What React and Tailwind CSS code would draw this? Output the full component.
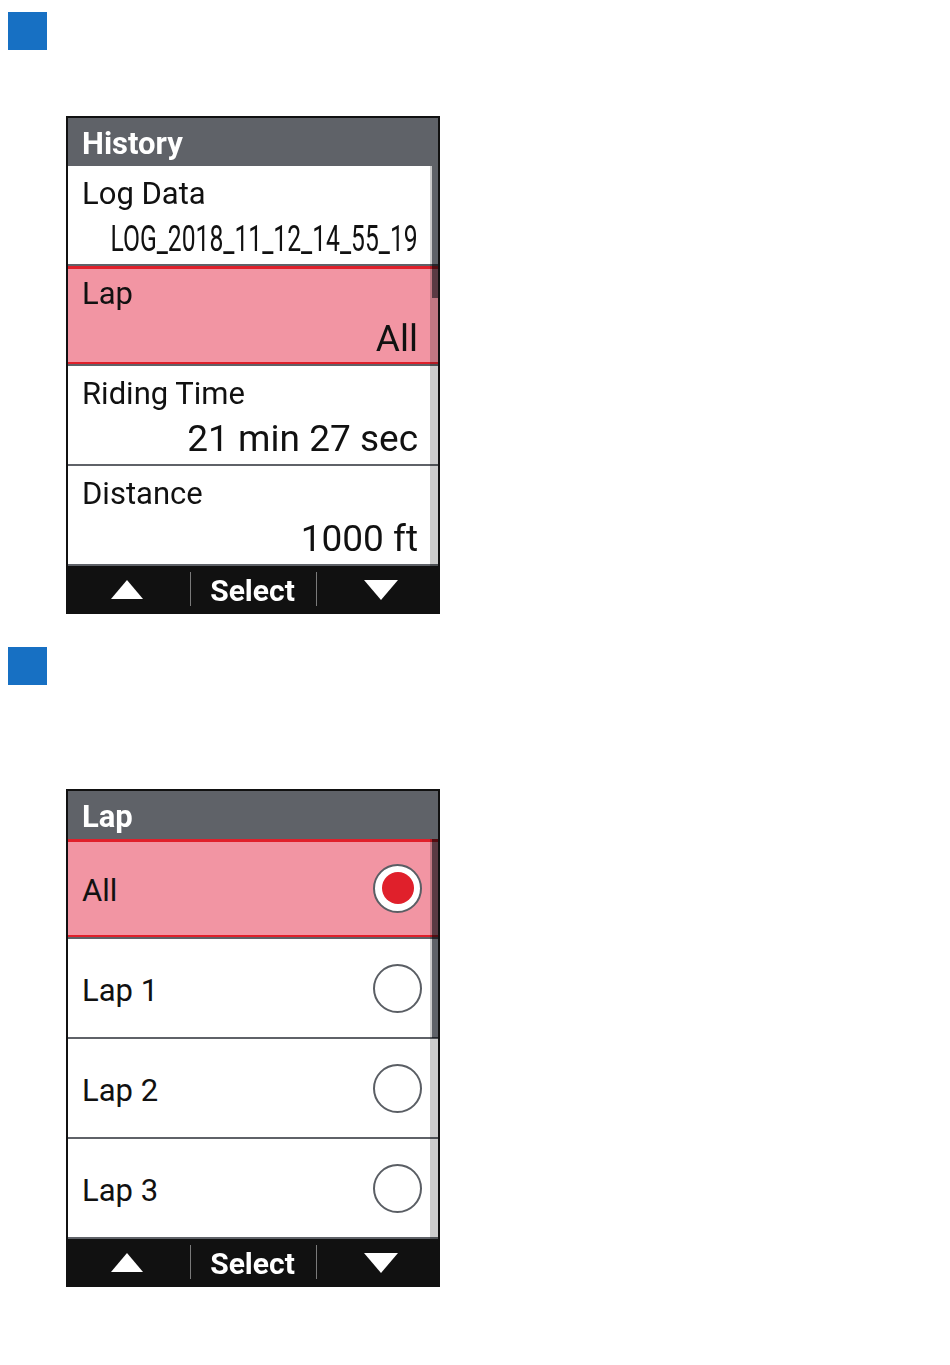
import clsx from 'clsx'

const FONT = { fontFamily: 'Roboto, "Noto Sans", sans-serif' }

function Marker({ className }) {
  return <div className={clsx('ml-[8px] h-[38px] w-[39px] bg-[#1770c3]', className)} />
}

function UpArrow() {
  return (
    <svg width="32" height="19" viewBox="0 0 32 19">
      <path d="M16 0 L32 19 L0 19 Z" fill="#fff" />
    </svg>
  )
}

function DownArrow() {
  return (
    <svg width="34" height="20" viewBox="0 0 34 20">
      <path d="M0 0 L34 0 L17 20 Z" fill="#fff" />
    </svg>
  )
}

function Footer() {
  return (
    <div className="flex h-[46px] items-center bg-[#111111]">
      <div className="flex w-[122px] justify-center pr-[4px]">
        <UpArrow />
      </div>
      <div className="h-[34px] w-px bg-[#7a7a7a]" />
      <div className="flex w-[125px] justify-center pt-[4px] pr-[2px] text-[30px] font-bold leading-[36px] text-white">
        Select
      </div>
      <div className="h-[34px] w-px bg-[#7a7a7a]" />
      <div className="flex flex-1 justify-center pl-[6px] pt-[1px]">
        <DownArrow />
      </div>
    </div>
  )
}

function Scrollbar({ thumb }) {
  return (
    <div className="absolute top-0 right-0 bottom-0 w-[8px] bg-[#cccccc] mix-blend-multiply">
      <div className={clsx('absolute top-0 right-0 w-[6px] bg-[#5f6268]', thumb)} />
    </div>
  )
}

function Panel({ title, children }) {
  return (
    <div className="ml-[66px] w-[374px] border-2 border-[#111111]" style={FONT}>
      <div className="flex h-[48px] items-center bg-[#5f6268] pl-[14px] pt-[3px] text-[31px] font-bold leading-[36px] text-white">
        {title}
      </div>
      {children}
      <Footer />
    </div>
  )
}

const selectedCls =
  'bg-[#f295a3] shadow-[inset_0_3px_0_#e0202b,inset_0_-2px_0_#e0202b]'

function InfoRow({ label, value, selected, condensed }) {
  return (
    <div
      className={clsx(
        'h-[100px] border-b-2 border-[#5f6268] pt-[10px] pr-[20px] pl-[14px] text-[#111111]',
        selected ? selectedCls : 'bg-white'
      )}
    >
      <div className="text-[31px] leading-[36px]">{label}</div>
      <div className="mt-[7px] flex justify-end text-[37px] leading-[40px]">
        {condensed ? (
          <span className="inline-block shrink-0 origin-right scale-x-[0.667] whitespace-nowrap">
            {value}
          </span>
        ) : (
          <span className="whitespace-nowrap">{value}</span>
        )}
      </div>
    </div>
  )
}

function Radio({ checked }) {
  return (
    <div className="flex h-[49px] w-[49px] items-center justify-center rounded-full border-2 border-[#5a5e64] bg-white">
      {checked && <div className="h-[32px] w-[32px] rounded-full bg-[#e0202b]" />}
    </div>
  )
}

function LapRow({ label, selected }) {
  return (
    <div
      className={clsx(
        'flex h-[100px] items-center justify-between border-b-2 border-[#5f6268] pr-[16px] pl-[14px] text-[#111111]',
        selected ? selectedCls : 'bg-white'
      )}
    >
      <span className="pt-[5px] text-[31px] leading-[36px]">{label}</span>
      <Radio checked={selected} />
    </div>
  )
}

export default function App() {
  return (
    <div className="min-h-[1365px] w-[950px] bg-white pt-[12px]">
      <Marker />

      <div className="mt-[66px]">
        <Panel title="History">
          <div className="relative">
            <InfoRow label="Log Data" value="LOG_2018_11_12_14_55_19" condensed />
            <InfoRow label="Lap" value="All" selected />
            <InfoRow label="Riding Time" value="21 min 27 sec" />
            <InfoRow label="Distance" value="1000 ft" />
            <Scrollbar thumb="h-[132px]" />
          </div>
        </Panel>
      </div>

      <Marker className="mt-[33px]" />

      <div className="mt-[104px]">
        <Panel title="Lap">
          <div className="relative">
            <LapRow label="All" selected />
            <LapRow label="Lap 1" />
            <LapRow label="Lap 2" />
            <LapRow label="Lap 3" />
            <Scrollbar thumb="h-[199px]" />
          </div>
        </Panel>
      </div>
    </div>
  )
}
